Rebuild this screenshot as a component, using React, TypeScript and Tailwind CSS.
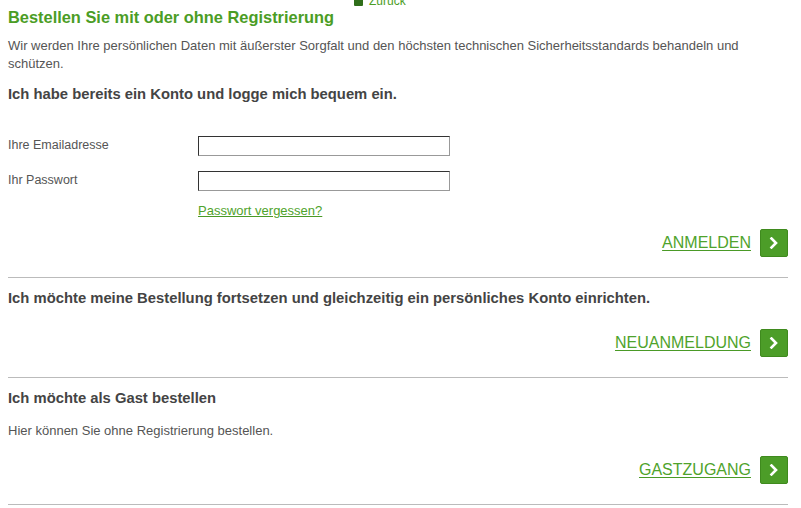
import React from "react";

const green = "text-[#4b9d25]";

function GoButton({ label }: { label: string }): React.ReactElement {
  return (
    <div className="flex items-center justify-end gap-[9px]">
      <a href="#" className="text-[16px] leading-[20px] text-[#4fa32c] underline decoration-[#4a9a26] underline-offset-[2px]">
        {label}
      </a>
      <button
        type="button"
        className="flex h-[28px] w-[28px] items-center justify-center rounded-[2px] border border-[#3f8a1e] bg-[#4c9d28]"
      >
        <svg width="10" height="12" viewBox="0 0 10 12" fill="none">
          <path d="M2.5 1.5 L7 6 L2.5 10.5" stroke="#fff" strokeWidth="2.6" strokeLinecap="square" />
        </svg>
      </button>
    </div>
  );
}

function Field({ label, type }: { label: string; type: string }): React.ReactElement {
  return (
    <div className="flex items-start">
      <label className="w-[190px] text-[12.5px] leading-[18px] text-[#555]">{label}</label>
      <input
        type={type}
        className="h-[20px] w-[252px] border border-t-[#333] border-l-[#333] border-b-[#999] border-r-[#999] bg-white outline-none"
      />
    </div>
  );
}

export default function App(): React.ReactElement {
  return (
    <div className="min-h-[508px] overflow-hidden bg-white font-['Liberation_Sans',Arial,sans-serif]">
      <div className="ml-2 w-[780px]">
        <div className="-mt-[5px] flex h-[12px] items-center gap-[6px] pl-[346px] text-[12px] leading-[12px]">
          <span className="inline-block h-[9px] w-[9px] rounded-[1px] bg-[#2f6e1a]" />
          <a href="#" className={green}>Zurück</a>
        </div>

        <h1 className={`text-[16.4px] font-bold leading-[20px] ${green}`}>
          Bestellen Sie mit oder ohne Registrierung
        </h1>

        <p className="mt-[10px] text-[13px] leading-[18px] text-[#555]">
          Wir werden Ihre persönlichen Daten mit äußerster Sorgfalt und den höchsten technischen Sicherheitsstandards behandeln und schützen.
        </p>

        <h2 className="mt-[11px] text-[14.8px] font-bold leading-[20px] text-[#444]">
          Ich habe bereits ein Konto und logge mich bequem ein.
        </h2>

        <div className="mt-[32px]">
          <Field label="Ihre Emailadresse" type="email" />
        </div>
        <div className="mt-[15px]">
          <Field label="Ihr Passwort" type="password" />
        </div>
        <div className="mt-[11px] pl-[190px] text-[13px] leading-[18px]">
          <a href="#" className="text-[#4fa32c] underline decoration-[#4a9a26]">
            Passwort vergessen?
          </a>
        </div>

        <div className="mt-[9px]">
          <GoButton label="ANMELDEN" />
        </div>

        <hr className="mt-[20px] border-t border-[#bbb]" />

        <h2 className="mt-[10px] text-[14.8px] font-bold leading-[20px] text-[#444]">
          Ich möchte meine Bestellung fortsetzen und gleichzeitig ein persönliches Konto einrichten.
        </h2>

        <div className="mt-[21px]">
          <GoButton label="NEUANMELDUNG" />
        </div>

        <hr className="mt-[20px] border-t border-[#bbb]" />

        <h2 className="mt-[10px] text-[14.8px] font-bold leading-[20px] text-[#444]">
          Ich möchte als Gast bestellen
        </h2>

        <p className="mt-[14px] text-[13px] leading-[18px] text-[#555]">
          Hier können Sie ohne Registrierung bestellen.
        </p>

        <div className="mt-[16px]">
          <GoButton label="GASTZUGANG" />
        </div>

        <hr className="mt-[20px] border-t border-[#bbb]" />
      </div>
    </div>
  );
}
